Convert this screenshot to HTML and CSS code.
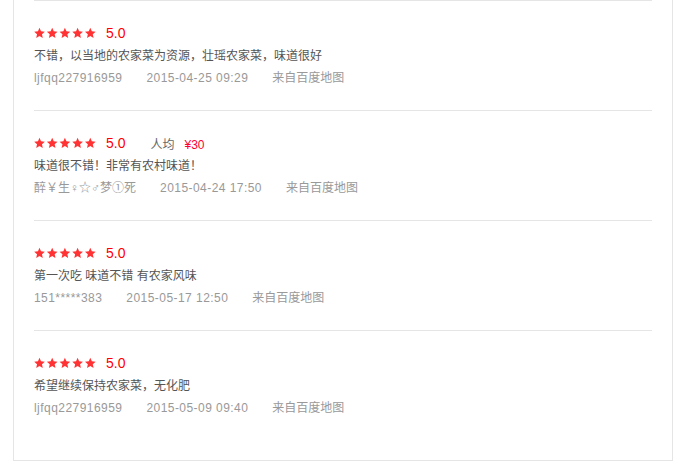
FILE: index.html
```html
<!DOCTYPE html>
<html lang="zh-CN">

<head>
    <meta charset="utf-8">
    <meta name="viewport" content="width=device-width, initial-scale=1.0">
    <title>评论</title>
    <link rel="stylesheet" href="styles.css">
</head>

<body>
    <svg class="defs" width="0" height="0">
        <defs>
            <polygon id="star" points="0,-5.6 1.53,-2.1 5.33,-1.73 2.47,0.8 3.29,4.53 0,2.6 -3.29,4.53 -2.47,0.8 -5.33,-1.73 -1.53,-2.1" />
        </defs>
    </svg>

    <section class="reviews">
        <article class="review">
            <div class="head">
                <svg class="stars" width="62" height="12" viewBox="0 0 62 12">
                    <use href="#star" x="5.5" y="6.4" />
                    <use href="#star" x="18.2" y="6.4" />
                    <use href="#star" x="30.9" y="6.4" />
                    <use href="#star" x="43.6" y="6.4" />
                    <use href="#star" x="56.3" y="6.4" />
                </svg>
                <span class="score">5.0</span>
            </div>
            <p class="text">不错，以当地的农家菜为资源，壮瑶农家菜，味道很好</p>
            <p class="meta"><span class="user latin">ljfqq227916959</span><span class="time latin">2015-04-25 09:29</span><span class="from">来自百度地图</span></p>
        </article>

        <article class="review">
            <div class="head">
                <svg class="stars" width="62" height="12" viewBox="0 0 62 12">
                    <use href="#star" x="5.5" y="6.4" />
                    <use href="#star" x="18.2" y="6.4" />
                    <use href="#star" x="30.9" y="6.4" />
                    <use href="#star" x="43.6" y="6.4" />
                    <use href="#star" x="56.3" y="6.4" />
                </svg>
                <span class="score">5.0</span>
                <span class="avg">人均<em>¥30</em></span>
            </div>
            <p class="text">味道很不错！非常有农村味道！</p>
            <p class="meta"><span class="user">醉￥生♀☆♂梦①死</span><span class="time latin">2015-04-24 17:50</span><span class="from">来自百度地图</span></p>
        </article>

        <article class="review">
            <div class="head">
                <svg class="stars" width="62" height="12" viewBox="0 0 62 12">
                    <use href="#star" x="5.5" y="6.4" />
                    <use href="#star" x="18.2" y="6.4" />
                    <use href="#star" x="30.9" y="6.4" />
                    <use href="#star" x="43.6" y="6.4" />
                    <use href="#star" x="56.3" y="6.4" />
                </svg>
                <span class="score">5.0</span>
            </div>
            <p class="text">第一次吃 味道不错 有农家风味</p>
            <p class="meta"><span class="user latin">151*****383</span><span class="time latin">2015-05-17 12:50</span><span class="from">来自百度地图</span></p>
        </article>

        <article class="review">
            <div class="head">
                <svg class="stars" width="62" height="12" viewBox="0 0 62 12">
                    <use href="#star" x="5.5" y="6.4" />
                    <use href="#star" x="18.2" y="6.4" />
                    <use href="#star" x="30.9" y="6.4" />
                    <use href="#star" x="43.6" y="6.4" />
                    <use href="#star" x="56.3" y="6.4" />
                </svg>
                <span class="score">5.0</span>
            </div>
            <p class="text">希望继续保持农家菜，无化肥</p>
            <p class="meta"><span class="user latin">ljfqq227916959</span><span class="time latin">2015-05-09 09:40</span><span class="from">来自百度地图</span></p>
        </article>
    </section>
</body>

</html>
```

FILE: styles.css
```css
body {
    margin: 0;
    background-color: #fff;
    font-family: "Liberation Sans", "Noto Sans CJK SC", sans-serif;
    font-size: 12px;
    color: #555;
}

.defs {
    position: absolute;
}

/***************liste**************/

.reviews {
    width: 618px;
    margin: 0 13px;
    padding: 0 20px 20px;
    border: 1px solid #e5e5e5;
    border-top: none;
}

.review {
    border-top: 1px solid #e5e5e5;
    padding: 22px 0 21px;
}

.head {
    display: flex;
    align-items: center;
    height: 20px;
}

.stars {
    display: block;
    fill: #f33;
}

.score {
    margin-left: 10px;
    font-size: 14px;
    color: #f00;
}

.avg {
    margin-left: 25px;
    color: #666;
}

.avg em {
    margin-left: 10px;
    font-style: normal;
    color: #f03;
}

.text {
    margin: 2px 0 0;
    line-height: 22px;
}

.meta {
    margin: 0;
    line-height: 22px;
    color: #999;
}

.user,
.time {
    margin-right: 24px;
}

.latin {
    letter-spacing: 0.45px;
}
```
